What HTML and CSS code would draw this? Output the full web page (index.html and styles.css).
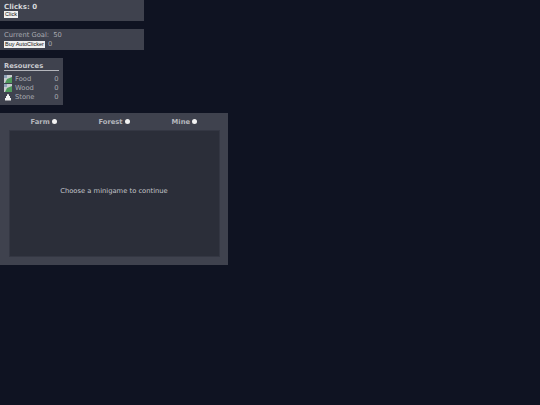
FILE: index.html
```html
<!DOCTYPE html>
<html lang="en">
<head>
    <meta charset="UTF-8">
    <title>Clicker</title>
    <link rel="stylesheet" href="styles.css">
</head>
<body>
    <div class="panel top-panel">
        <div class="clicks">Clicks: 0</div>
        <button class="btn">Click</button>
    </div>

    <div class="panel top-panel goal-panel">
        <div class="goal"><span>Current Goal:</span> <span>50</span></div>
        <div><button class="btn">Buy AutoClicker</button> <span class="count">0</span></div>
    </div>

    <div class="panel resources">
        <div class="res-title">Resources</div>
        <div class="res-row">
            <svg class="res-icon" viewBox="0 0 8 8"><rect width="8" height="8" fill="#c9ccd0"/><path d="M1 8 L3 4 L8 2 V8 Z" fill="#4f9a5c"/><rect x="0" y="0" width="3" height="3" fill="#8fa3b8"/></svg>
            <span class="res-name">Food</span><span class="res-val">0</span>
        </div>
        <div class="res-row">
            <svg class="res-icon" viewBox="0 0 8 8"><rect width="8" height="8" fill="#c9ccd0"/><path d="M1 8 L3 4 L8 2 V8 Z" fill="#4f9a5c"/><rect x="0" y="0" width="3" height="3" fill="#8fa3b8"/></svg>
            <span class="res-name">Wood</span><span class="res-val">0</span>
        </div>
        <div class="res-row">
            <svg class="res-icon" viewBox="0 0 8 8"><path d="M3 1.5 Q4 .5 5 1.5 V3 H6 V5 H7 V7.5 H1 V5 H2 V3 H3 Z" fill="#f2f2f2"/></svg>
            <span class="res-name">Stone</span><span class="res-val">0</span>
        </div>
    </div>

    <div class="panel game">
        <div class="game-tabs">
            <div class="game-tab">Farm <span class="dot"></span></div>
            <div class="game-tab">Forest <span class="dot"></span></div>
            <div class="game-tab">Mine <span class="dot"></span></div>
        </div>
        <div class="game-area">Choose a minigame to continue</div>
    </div>
</body>
</html>
```

FILE: styles.css
```css
* {
    box-sizing: border-box;
}
body {
    margin: 0;
    background-color: #0f1322;
    color: #c3c5ca;
    font-family: "DejaVu Sans", sans-serif;
    font-size: 6.75px;
}
.panel {
    background: #3f424e;
    margin-bottom: 8px;
}
.top-panel {
    width: 143.5px;
    height: 21px;
    padding: 3px 4px 0;
}
.clicks {
    font-size: 7px;
    font-weight: bold;
    line-height: 8px;
    color: #d6d7da;
}
.goal-panel {
    padding-top: 2px;
}
.goal {
    line-height: 9px;
    color: #a9abb2;
}
.goal span + span {
    margin-left: 2px;
}
.btn {
    display: inline-block;
    margin: 0;
    padding: 0 1px;
    height: 7px;
    border: none;
    background: #f0f0f0;
    color: #111;
    font-family: "Liberation Sans", sans-serif;
    font-size: 5.5px;
    line-height: 7px;
    vertical-align: top;
}
.goal-panel .btn {
    margin-top: 1px;
}
.count {
    margin-left: 1px;
    line-height: 9px;
    color: #a9abb2;
}
.resources {
    width: 62.5px;
    height: 47px;
    padding: 5px 4px 0;
}
.res-title {
    height: 8px;
    font-weight: bold;
    line-height: 7px;
    color: #c9cbd0;
    border-bottom: 1px solid #b4b6bc;
    margin-bottom: 3px;
}
.res-row {
    display: flex;
    align-items: center;
    height: 9px;
    color: #a9abb2;
}
.res-icon {
    width: 8px;
    height: 8px;
    margin-right: 3px;
}
.res-name {
    flex: 1;
}
.game {
    width: 228px;
    height: 152px;
    padding: 0 8.5px 8.5px;
}
.game-tabs {
    display: grid;
    grid-template-columns: repeat(3, 1fr);
    height: 17px;
    padding-top: 1px;
    align-items: center;
}
.game-tab {
    display: flex;
    align-items: center;
    justify-content: center;
    gap: 2px;
    font-weight: bold;
    color: #b4b6bc;
}
.dot {
    width: 5px;
    height: 5px;
    margin-bottom: 1px;
    border-radius: 50%;
    background: #f2f2f2;
}
.game-area {
    height: 126.5px;
    padding-bottom: 5px;
    background: #2b2e39;
    border: 1px solid #343743;
    display: flex;
    align-items: center;
    justify-content: center;
    color: #c3c5ca;
}
```
